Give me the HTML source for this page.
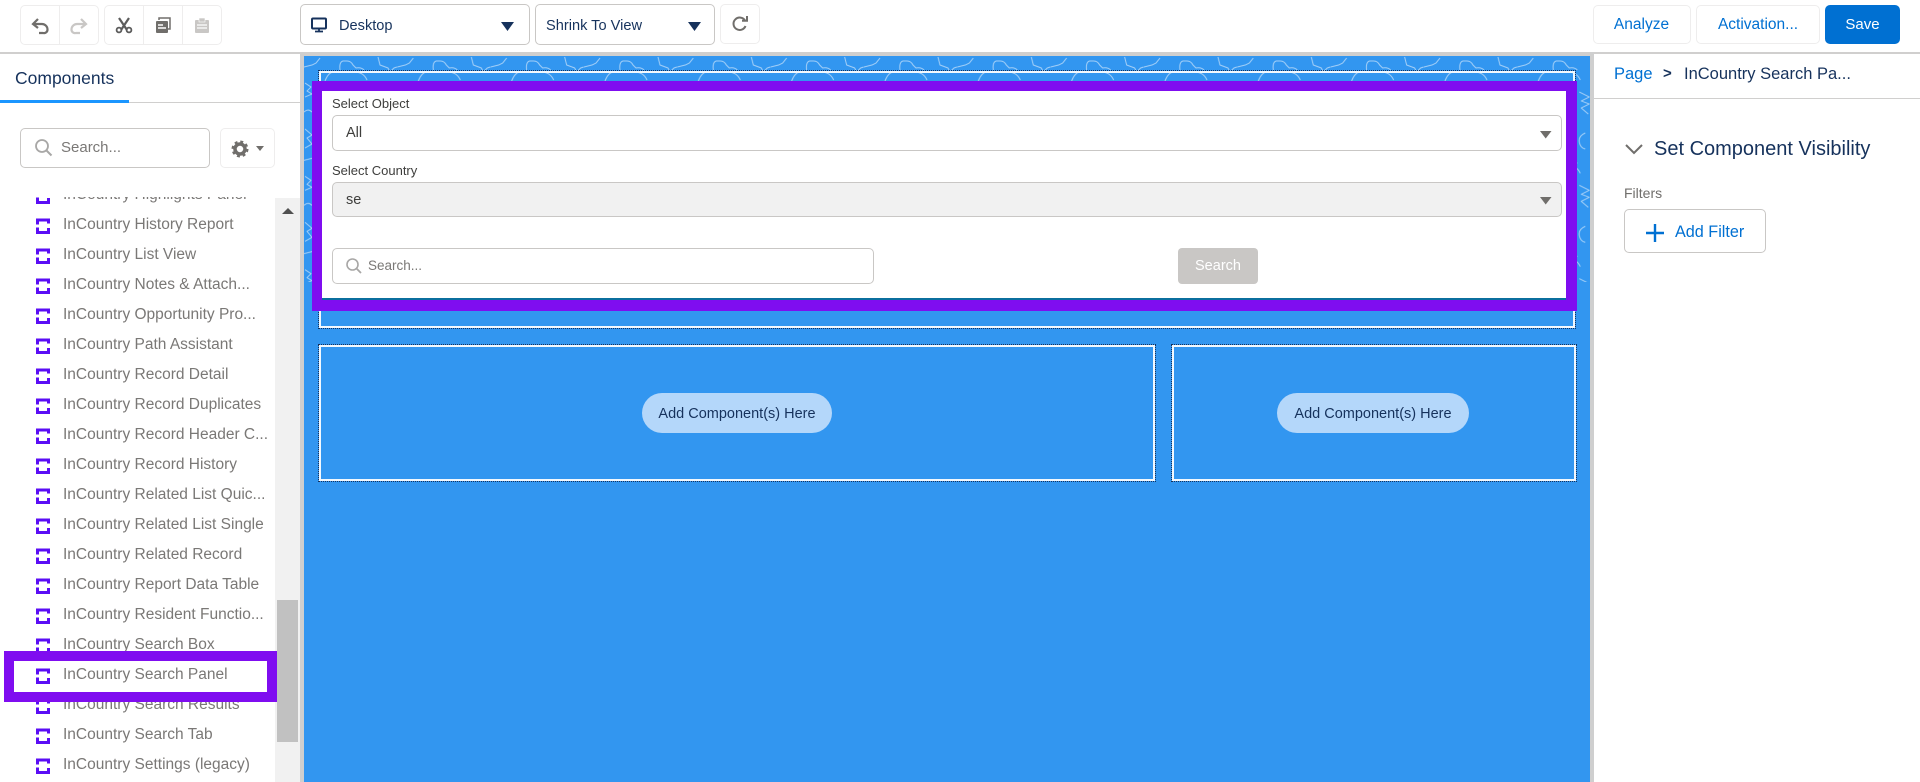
<!DOCTYPE html>
<html><head><meta charset="utf-8"><style>
html,body{margin:0;padding:0;background:#fff}
body{width:1920px;height:782px;overflow:hidden;position:relative;font-family:"Liberation Sans",sans-serif;color:#3e3e3c}
.a{position:absolute;box-sizing:border-box}
.t{position:absolute;white-space:nowrap;line-height:20px;height:20px}
.btn{position:absolute;box-sizing:border-box;background:#fff;border:1px solid #eeeded;border-radius:5px}
.sel{position:absolute;box-sizing:border-box;background:#fff;border:1px solid #c9c7c5;border-radius:5px}
.row{position:absolute;left:63px;white-space:nowrap;font-size:15.5px;line-height:20px;color:#7a7876}
.ic{position:absolute;left:35px;width:17px;height:18px;margin-top:1px}
.dz{position:absolute;box-sizing:border-box;border:2px solid #f2f8fe;outline:1px dotted #16325c;outline-offset:0}
.pill{position:absolute;box-sizing:border-box;background:#b4d7fa;border-radius:20px;height:40px;color:#16325c;font-size:14.500px;line-height:42px;text-align:center;white-space:nowrap}
</style></head><body>
<svg width="0" height="0" style="position:absolute"><defs>
<symbol id="k" viewBox="0 0 17 18"><path d="M2.500 7.500V3H13.500V6.500M2.500 10.500V15.500H13.500V11" fill="none" stroke="#5a0df5" stroke-width="3"/></symbol>
</defs></svg>

<!-- toolbar -->
<div class="a" style="left:0;top:0;width:1920px;height:52px;background:#fff"></div>
<div class="btn" style="left:20px;top:5px;width:79px;height:40px"></div>
<div class="a" style="left:59px;top:5px;width:1px;height:40px;background:#eeeded"></div>
<div class="btn" style="left:104px;top:5px;width:118px;height:40px"></div>
<div class="a" style="left:143px;top:5px;width:1px;height:40px;background:#eeeded"></div>
<div class="a" style="left:182px;top:5px;width:1px;height:40px;background:#eeeded"></div>
<svg class="a" style="left:0;top:0" width="230" height="52" fill="none">
<path d="M38 19l-5 5 5 4M33.500 24H42a5.500 5.500 0 0 1 5.500 5.500v0A3.500 3.500 0 0 1 43 33H39" stroke="#706e6b" stroke-width="2.200"/>
<path d="M81 19l5 5-5 4M85.500 24H77a5.500 5.500 0 0 0-5.500 5.500v0A3.500 3.500 0 0 0 76 33H80" stroke="#c9c7c5" stroke-width="2.200"/>
<path d="M119 18l8 12M129 18l-8 12" stroke="#5c5c5c" stroke-width="2.200"/>
<circle cx="119" cy="30" r="2.400" stroke="#5c5c5c" stroke-width="1.800"/><circle cx="129" cy="30" r="2.400" stroke="#5c5c5c" stroke-width="1.800"/>
<path d="M159 20V18H170V29H168" stroke="#706e6b" stroke-width="1.500"/>
<rect x="156" y="21" width="12" height="12" rx="1" fill="#706e6b"/><path d="M158 25h5M158 28h8" stroke="#fff" stroke-width="1.400"/>
<rect x="195" y="20" width="14" height="13" rx="1" fill="#c9c7c5"/><rect x="199" y="18" width="6" height="4" fill="#c9c7c5" stroke="#fff" stroke-width=".6"/><path d="M197 25h10M197 28h10" stroke="#fff" stroke-width="1.200"/>
</svg>

<div class="sel" style="left:300px;top:4px;width:230px;height:41px"></div>
<svg class="a" style="left:310px;top:17px" width="20" height="18"><rect x="2" y="1.500" width="14" height="10" rx="1" fill="none" stroke="#16325c" stroke-width="2"/><path d="M5 14.500h8M9 12v2" stroke="#16325c" stroke-width="1.800"/></svg>
<div class="t" style="left:339px;top:16px;font-size:14.600px;color:#16325c">Desktop</div>
<svg class="a" style="left:500px;top:21px" width="16" height="12"><path d="M1 1h13L7.500 10z" fill="#16325c"/></svg>
<div class="sel" style="left:535px;top:4px;width:180px;height:41px"></div>
<div class="t" style="left:546px;top:16px;font-size:14.600px;color:#16325c">Shrink To View</div>
<svg class="a" style="left:687px;top:21px" width="16" height="12"><path d="M1 1h13L7.500 10z" fill="#16325c"/></svg>
<div class="btn" style="left:720px;top:4px;width:40px;height:40px"></div>
<svg class="a" style="left:730px;top:14px" width="20" height="20" fill="none"><path d="M15 6.500A6.200 6.200 0 1 0 15.500 12" stroke="#706e6b" stroke-width="2"/><path d="M12 6.800h5V2" stroke="#706e6b" stroke-width="2"/></svg>

<div class="btn" style="left:1593px;top:5px;width:98px;height:39px"></div>
<div class="t" style="left:1593px;width:97px;text-align:center;top:15px;font-size:15.500px;color:#0070d2">Analyze</div>
<div class="btn" style="left:1696px;top:5px;width:124px;height:39px"></div>
<div class="t" style="left:1696px;width:124px;text-align:center;top:15px;font-size:15.500px;color:#0070d2">Activation...</div>
<div class="a" style="left:1825px;top:5px;width:75px;height:39px;background:#0070d2;border-radius:5px"></div>
<div class="t" style="left:1825px;width:75px;text-align:center;top:15px;font-size:15px;color:#fff">Save</div>
<div class="a" style="left:0;top:52px;width:1920px;height:2px;background:#d0cfce"></div>

<!-- sidebar -->
<div class="t" style="left:15px;top:68px;font-size:17.500px;color:#16325c">Components</div>
<div class="a" style="left:0;top:102px;width:300px;height:1px;background:#d0cfce"></div>
<div class="a" style="left:0;top:100px;width:129px;height:3px;background:#1b96ff"></div>
<div class="sel" style="left:20px;top:128px;width:190px;height:40px"></div>
<svg class="a" style="left:34px;top:138px" width="20" height="20" fill="none"><circle cx="8" cy="8" r="6" stroke="#a8a7a6" stroke-width="1.800"/><path d="M12.500 12.500l5 5" stroke="#a8a7a6" stroke-width="2"/></svg>
<div class="t" style="left:61px;top:138px;font-size:15px;color:#7a7876">Search...</div>
<div class="btn" style="left:220px;top:128px;width:55px;height:40px"></div>
<svg class="a" style="left:230px;top:139px" width="36" height="20" fill="none"><circle cx="10" cy="10" r="5" stroke="#706e6b" stroke-width="3.500"/><circle cx="10" cy="10" r="7.500" stroke="#706e6b" stroke-width="2" stroke-dasharray="3 2.900"/><path d="M26 7h8l-4 5z" fill="#706e6b"/></svg>

<div class="a" style="left:0;top:197px;width:275px;height:585px;overflow:hidden" >
<div style="position:absolute;left:0;top:-197px;width:275px;height:782px">
<svg class="ic" style="top:186px"><use href="#k"/></svg><div class="row" style="top:185px">InCountry Highlights Panel</div>
<svg class="ic" style="top:216px"><use href="#k"/></svg><div class="row" style="top:215px">InCountry History Report</div>
<svg class="ic" style="top:246px"><use href="#k"/></svg><div class="row" style="top:245px">InCountry List View</div>
<svg class="ic" style="top:276px"><use href="#k"/></svg><div class="row" style="top:275px">InCountry Notes &amp; Attach...</div>
<svg class="ic" style="top:306px"><use href="#k"/></svg><div class="row" style="top:305px">InCountry Opportunity Pro...</div>
<svg class="ic" style="top:336px"><use href="#k"/></svg><div class="row" style="top:335px">InCountry Path Assistant</div>
<svg class="ic" style="top:366px"><use href="#k"/></svg><div class="row" style="top:365px">InCountry Record Detail</div>
<svg class="ic" style="top:396px"><use href="#k"/></svg><div class="row" style="top:395px">InCountry Record Duplicates</div>
<svg class="ic" style="top:426px"><use href="#k"/></svg><div class="row" style="top:425px">InCountry Record Header C...</div>
<svg class="ic" style="top:456px"><use href="#k"/></svg><div class="row" style="top:455px">InCountry Record History</div>
<svg class="ic" style="top:486px"><use href="#k"/></svg><div class="row" style="top:485px">InCountry Related List Quic...</div>
<svg class="ic" style="top:516px"><use href="#k"/></svg><div class="row" style="top:515px">InCountry Related List Single</div>
<svg class="ic" style="top:546px"><use href="#k"/></svg><div class="row" style="top:545px">InCountry Related Record</div>
<svg class="ic" style="top:576px"><use href="#k"/></svg><div class="row" style="top:575px">InCountry Report Data Table</div>
<svg class="ic" style="top:606px"><use href="#k"/></svg><div class="row" style="top:605px">InCountry Resident Functio...</div>
<svg class="ic" style="top:636px"><use href="#k"/></svg><div class="row" style="top:635px">InCountry Search Box</div>
<svg class="ic" style="top:666px"><use href="#k"/></svg><div class="row" style="top:665px">InCountry Search Panel</div>
<svg class="ic" style="top:696px"><use href="#k"/></svg><div class="row" style="top:695px">InCountry Search Results</div>
<svg class="ic" style="top:726px"><use href="#k"/></svg><div class="row" style="top:725px">InCountry Search Tab</div>
<svg class="ic" style="top:756px"><use href="#k"/></svg><div class="row" style="top:755px">InCountry Settings (legacy)</div>
</div></div>
<div class="a" style="left:275px;top:198px;width:25px;height:584px;background:#f1f1f1"></div>
<svg class="a" style="left:281px;top:205px" width="14" height="10"><path d="M1 9L7 3l6 6z" fill="#505050"/></svg>
<div class="a" style="left:277px;top:600px;width:21px;height:142px;background:#c1c1c1"></div>
<div class="a" style="left:4px;top:651px;width:273px;height:51px;border:10px solid #7f0df0"></div>

<!-- canvas -->
<div class="a" style="left:300px;top:52px;width:4px;height:730px;background:#cfcfcf"></div>
<div class="a" style="left:304px;top:54px;width:1286px;height:2px;background:#d0cfce"></div>
<div class="a" style="left:1590px;top:52px;width:4px;height:730px;background:#cfcfcf"></div>
<div class="a" style="left:304px;top:56px;width:1286px;height:726px;background:#3296f0"></div>
<svg class="a" style="left:304px;top:56px" width="1286" height="226" fill="none">
<defs><pattern id="p" patternUnits="userSpaceOnUse" width="93.330" height="93.330">
<g stroke="#a3cff7" stroke-width="1" stroke-linejoin="round">
<path d="M36 14Q35 6 39 5H43Q47 5 49 9L52 12Q57 11 60 14"/>
<path d="M74 1L76 9 84 12 86 16 90 12 93 11"/>
<path d="M-19.330 1L-17.330 9-9.330 12-7.330 16-3.330 12 0 11 8 9 12 7 16 2"/>
<path d="M21 25Q24 17 29 16H52Q60 17 63 24"/>
<path d="M1 27L7 31 3 35 8 38 1 41M0 56Q4 52 8 56M1 73L8 79 3 82 8 88 1 92"/>
<path d="M62 36L72 41 64 45 72 48 64 52 71 58"/>
<path d="M68 77Q61 80 62 86 63 92 68 93"/>
</g></pattern></defs>
<rect width="1286" height="226" fill="url(#p)"/></svg>

<div class="dz" style="left:319px;top:71px;width:1256px;height:257px"></div>
<div class="dz" style="left:319px;top:345px;width:836px;height:136px"></div>
<div class="dz" style="left:1172px;top:345px;width:404px;height:136px"></div>
<div class="pill" style="left:642px;top:393px;width:190px">Add Component(s) Here</div>
<div class="pill" style="left:1277px;top:393px;width:192px">Add Component(s) Here</div>

<div class="a" style="left:312px;top:81px;width:1265px;height:230px;background:#7f0df0"></div>
<div class="a" style="left:322px;top:91px;width:1244px;height:209px;background:#fff;border-bottom:2px solid #0b6f9e"></div>

<div class="t" style="left:332px;top:94px;font-size:13px">Select Object</div>
<div class="sel" style="left:332px;top:115px;width:1230px;height:36px"></div>
<div class="t" style="left:346px;top:123px;font-size:14.500px">All</div>
<svg class="a" style="left:1539px;top:130px" width="14" height="10"><path d="M1 1h11.500L6.700 8.500z" fill="#706e6b"/></svg>
<div class="t" style="left:332px;top:161px;font-size:13px">Select Country</div>
<div class="sel" style="left:332px;top:182px;width:1230px;height:35px;background:#f1f1f1"></div>
<div class="t" style="left:346px;top:190px;font-size:14.500px">se</div>
<svg class="a" style="left:1539px;top:196px" width="14" height="10"><path d="M1 1h11.500L6.700 8.500z" fill="#706e6b"/></svg>
<div class="sel" style="left:332px;top:248px;width:542px;height:36px"></div>
<svg class="a" style="left:345px;top:257px" width="18" height="18" fill="none"><circle cx="7.500" cy="7.500" r="5.500" stroke="#a8a7a6" stroke-width="1.600"/><path d="M11.500 11.500l4.500 4.500" stroke="#a8a7a6" stroke-width="1.800"/></svg>
<div class="t" style="left:368px;top:256px;font-size:13.500px;color:#7a7876">Search...</div>
<div class="a" style="left:1178px;top:248px;width:80px;height:36px;background:#c9c7c5;border-radius:4px"></div>
<div class="t" style="left:1178px;width:80px;text-align:center;top:256px;font-size:14.500px;color:#fff">Search</div>

<!-- right panel -->
<div class="t" style="left:1614px;top:64px;font-size:16.500px;color:#0070d2">Page</div>
<div class="t" style="left:1663px;top:64px;font-size:15px;font-weight:bold;color:#16325c">&gt;</div>
<div class="t" style="left:1684px;top:64px;font-size:16.500px;color:#16325c">InCountry Search Pa...</div>
<div class="a" style="left:1594px;top:98px;width:326px;height:1px;background:#d0cfce"></div>
<svg class="a" style="left:1624px;top:142px" width="20" height="14" fill="none"><path d="M2 3l8 8 8-8" stroke="#706e6b" stroke-width="2"/></svg>
<div class="t" style="left:1654px;top:139px;font-size:20px;color:#16325c">Set Component Visibility</div>
<div class="t" style="left:1624px;top:183px;font-size:14px;color:#706e6b">Filters</div>
<div class="sel" style="left:1624px;top:209px;width:142px;height:44px"></div>
<svg class="a" style="left:1645px;top:223px" width="20" height="20"><path d="M10 1v18M1 10h18" stroke="#0070d2" stroke-width="2.400"/></svg>
<div class="t" style="left:1675px;top:222px;font-size:16.200px;color:#0070d2">Add Filter</div>
</body></html>
